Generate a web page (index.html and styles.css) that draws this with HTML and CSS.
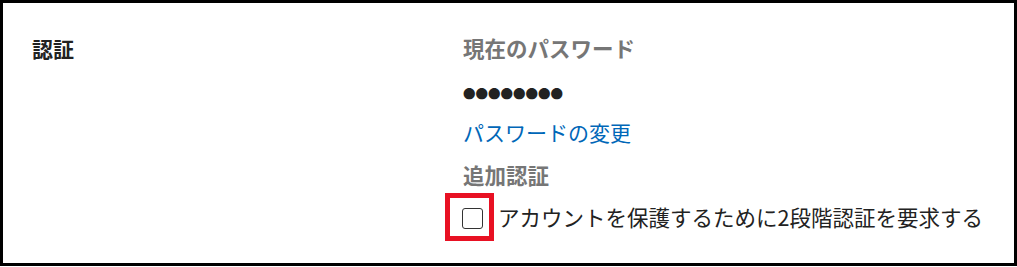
FILE: index.html
```html
<!DOCTYPE html>
<html lang="ja">
<head>
    <meta charset="UTF-8">
    <meta name="viewport" content="width=device-width, initial-scale=1.0">
    <title>認証</title>
    <link rel="stylesheet" href="styles.css">
</head>
<body>
    <div class="frame">
        <section class="settings-row">
            <h2 class="row-title">認証</h2>
            <div class="row-body">
                <h3 class="field-label">現在のパスワード</h3>
                <p class="password-mask">●●●●●●●●</p>
                <a class="link" href="#">パスワードの変更</a>
                <h3 class="field-label extra">追加認証</h3>
                <label class="check-row">
                    <span class="highlight"><input type="checkbox" class="check"></span>
                    <span class="check-text">アカウントを保護するために2段階認証を要求する</span>
                </label>
            </div>
        </section>
    </div>
</body>
</html>
```

FILE: styles.css
```css
body {
    margin: 0;
    font-family: "Noto Sans CJK JP", "Noto Sans", sans-serif;
    background: #fff;
    color: #222;
}
.frame {
    box-sizing: border-box;
    width: 1017px;
    height: 266px;
    border: 3px solid #000;
    padding: 30px 0 0 29px;
}
.settings-row {
    display: grid;
    grid-template-columns: 431px 1fr;
}
.row-title {
    margin: 0;
    font-size: 21px;
    line-height: 30px;
    font-weight: 700;
    color: #222;
}
.row-body {
    display: flex;
    flex-direction: column;
    align-items: flex-start;
}
.field-label {
    margin: 0;
    font-size: 21.5px;
    line-height: 30px;
    font-weight: 700;
    color: #767676;
}
.password-mask {
    margin: 16px 0 0;
    font-size: 12.5px;
    line-height: 30px;
    color: #222;
}
.link {
    margin-top: 8px;
    font-size: 21px;
    line-height: 30px;
    color: #0067b8;
    text-decoration: none;
}
.field-label.extra {
    margin-top: 13px;
}
.check-row {
    display: flex;
    align-items: center;
    margin: 3px 0 0 -18px;
    gap: 4px;
}
.highlight {
    display: flex;
    padding: 10px 6px 7px 12px;
    border: 5px solid #e81123;
}
.check {
    appearance: none;
    margin: 0;
    width: 21px;
    height: 21px;
    border: 1px solid #333;
    border-radius: 3px;
    background: #fff;
}
.check-text {
    font-size: 21.5px;
    line-height: 30px;
    color: #222;
}
```
